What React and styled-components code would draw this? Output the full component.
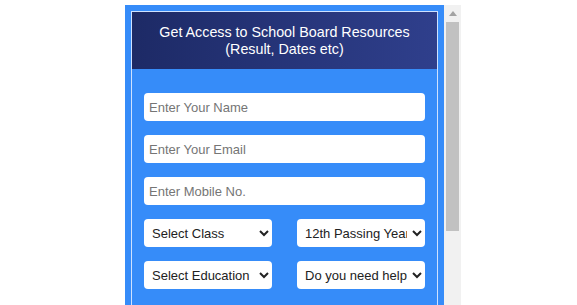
import styled, { createGlobalStyle } from 'styled-components';

const GlobalStyle = createGlobalStyle`
  html, body {
    margin: 0;
    background: #fff;
    font-family: 'Liberation Sans', Arial, sans-serif;
    overflow: hidden;
  }
`;

const Page = styled.div`
  padding: 5px 0 0 125px;
`;

// the embedded widget: scrolling content plus a classic scrollbar rail
const Frame = styled.div`
  display: flex;
  width: 336px;
  height: 400px;
`;

const ScrollBox = styled.div`
  width: 319px;
  height: 100%;
  overflow-y: auto;
  overflow-x: hidden;
  scrollbar-width: none;

  &::-webkit-scrollbar {
    display: none;
  }
`;

const Rail = styled.div`
  width: 17px;
  height: 100%;
  background: #f1f1f1;
  display: flex;
  flex-direction: column;
`;

const RailButton = styled.div`
  height: 17px;
  display: flex;
  align-items: center;
  justify-content: center;
`;

const Thumb = styled.div`
  margin: 0 2px;
  height: ${(p) => p.$size}px;
  background: #c1c1c1;
`;

const BlueWrap = styled.div`
  background: #368cf9;
  padding: 6px;
  min-height: 700px;
  box-sizing: border-box;
`;

const Card = styled.div`
  border: 1px solid #cfe2ff;
`;

const Header = styled.div`
  background: linear-gradient(90deg, #1d2a66 0%, #2f3f8c 100%);
  color: #fff;
  text-align: center;
  font-size: 14.3px;
  line-height: 17px;
  padding: 11.5px 6px;
`;

const Body = styled.form`
  display: flex;
  flex-direction: column;
  gap: 14px;
  padding: 24px 12px;
`;

const Field = styled.input`
  box-sizing: border-box;
  width: 100%;
  height: 28px;
  border: none;
  border-radius: 4px;
  padding: 0 5px;
  font-family: 'Liberation Sans', Arial, sans-serif;
  font-size: 13px;
  color: #222;
  background: #fff;
  outline: none;

  &::placeholder {
    color: #757575;
  }
`;

const Pair = styled.div`
  display: grid;
  grid-template-columns: 1fr 1fr;
  column-gap: 25px;
`;

const Select = styled.select`
  box-sizing: border-box;
  width: 100%;
  height: 28px;
  border: none;
  border-radius: 4px;
  padding: 0 2px 0 4px;
  font-family: 'Liberation Sans', Arial, sans-serif;
  font-size: 13px;
  color: #222;
  background: #fff;
  outline: none;
`;

export default function App() {
  return (
    <>
      <GlobalStyle />
      <Page>
        <Frame>
          <ScrollBox>
            <BlueWrap>
              <Card>
                <Header>
                  Get Access to School Board Resources
                  <br />
                  (Result, Dates etc)
                </Header>
                <Body onSubmit={(e) => e.preventDefault()}>
                  <Field type="text" placeholder="Enter Your Name" />
                  <Field type="email" placeholder="Enter Your Email" />
                  <Field type="tel" placeholder="Enter Mobile No." />
                  <Pair>
                    <Select defaultValue="">
                      <option value="">Select Class</option>
                      <option>Class 10</option>
                      <option>Class 12</option>
                    </Select>
                    <Select defaultValue="">
                      <option value="">12th Passing Year</option>
                      <option>2024</option>
                      <option>2025</option>
                    </Select>
                  </Pair>
                  <Pair>
                    <Select defaultValue="">
                      <option value="">Select Education</option>
                      <option>CBSE</option>
                      <option>State Board</option>
                    </Select>
                    <Select defaultValue="">
                      <option value="">Do you need help?</option>
                      <option>Yes</option>
                      <option>No</option>
                    </Select>
                  </Pair>
                </Body>
              </Card>
            </BlueWrap>
          </ScrollBox>
          <Rail>
            <RailButton>
              <svg width="8" height="5" viewBox="0 0 8 5">
                <path d="M0 5 L4 0 L8 5 Z" fill="#a3a3a3" />
              </svg>
            </RailButton>
            <Thumb $size={209} />
          </Rail>
        </Frame>
      </Page>
    </>
  );
}
